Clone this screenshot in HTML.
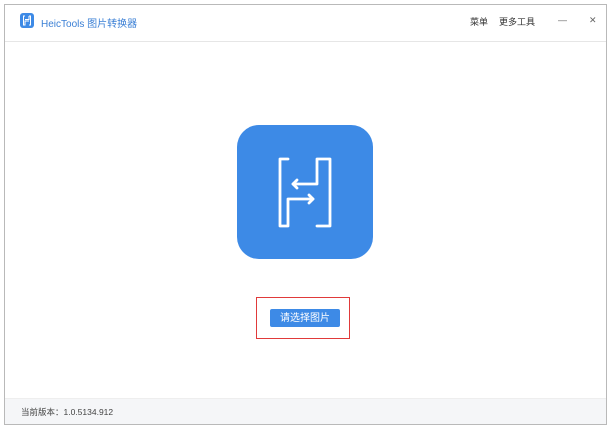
<!DOCTYPE html>
<html><head><meta charset="utf-8"><style>
body{margin:0;width:611px;height:429px;background:#fff;position:relative;overflow:hidden;font-family:"Liberation Sans","Noto Sans CJK SC",sans-serif}
.frame{position:absolute;left:4px;top:4px;width:601px;height:419px;border:1px solid #b9b9b9;background:#fff}
.title{position:absolute;left:0;top:0;width:601px;height:36px;border-bottom:1px solid #e6e6e6}
.logo{position:absolute;left:15px;top:8px;width:14px;height:15px;background:#3d8ae6;border-radius:3px}
.tt{position:absolute;left:36px;top:10px;font-size:10px;color:#3a7fd5}
.m{position:absolute;top:10px;font-size:9px;color:#333}
.foot{position:absolute;left:0;bottom:0;width:601px;height:25px;background:#f5f6f8;border-top:1px solid #eee}
.foot span{position:absolute;left:16px;top:7px;font-size:8.5px;color:#444}
.icon{position:absolute;left:237px;top:125px;width:136px;height:134px;background:#3d8ae6;border-radius:22px}
.red{position:absolute;left:256px;top:297px;width:92px;height:40px;border:1.5px solid #e03a3a}
.btn{position:absolute;left:270px;top:309px;width:70px;height:18px;background:#3d8ae6;border-radius:2px;color:#fff;font-size:10px;text-align:center;line-height:20px}
</style></head><body>
<div class="frame">
<div class="title">
<div class="logo"><svg width="14" height="15" viewBox="0 0 14 15"><path d="M5 3H3.5V12H5V8H9M9 3H10.5V12H9M9 3V6.5H5" stroke="#fff" stroke-width="1" fill="none"/></svg></div>
<div class="tt">HeicTools 图片转换器</div>
<div class="m" style="left:465px">菜单</div>
<div class="m" style="left:494px">更多工具</div>
<div class="m" style="left:553px;color:#666;font-size:9px">—</div>
<div class="m" style="left:584px;color:#666">✕</div>
</div>
<div class="foot"><span>当前版本：1.0.5134.912</span></div>
</div>
<div class="icon"><svg width="136" height="134" viewBox="237 125 136 134" style="position:absolute;left:0;top:0">
<g stroke="#fff" stroke-width="2.8" fill="none" stroke-linecap="round" stroke-linejoin="round">
<path d="M288 159H280V226H288V199H313"/><path d="M309 195L313 199L309 203"/>
<path d="M317 226H330V159H317V184H293"/><path d="M297 180L293 184L297 188"/>
</g></svg></div>
<div class="red"></div>
<div class="btn">请选择图片</div>
</body></html>
